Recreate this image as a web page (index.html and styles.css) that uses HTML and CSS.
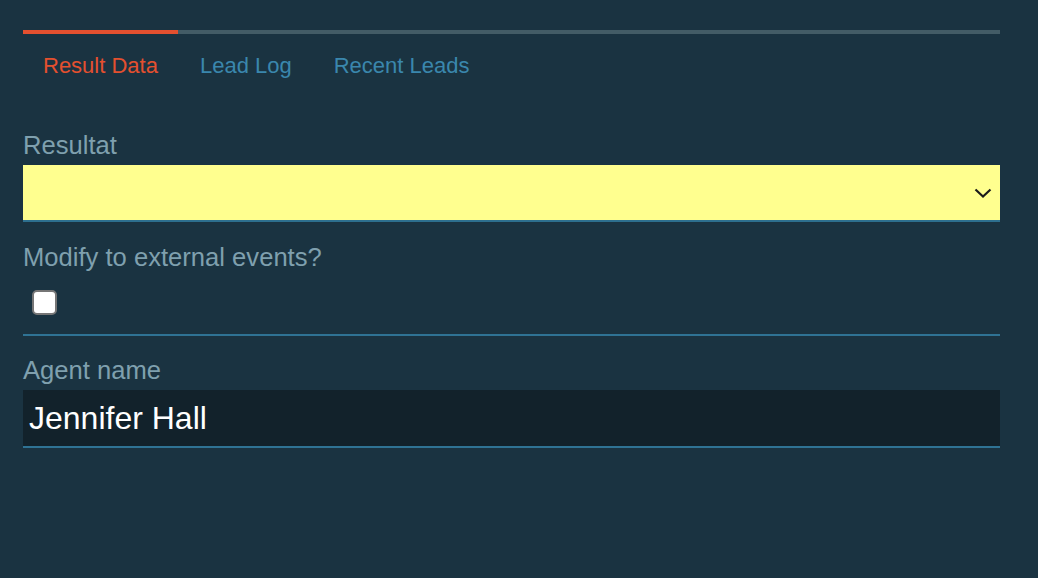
FILE: index.html
```html
<!DOCTYPE html>
<html lang="en">
<head>
<meta charset="utf-8">
<title>Result Data</title>
<link rel="stylesheet" href="styles.css">
</head>
<body>
<div class="panel">
  <nav class="tabs">
    <a class="tab active">Result Data</a>
    <a class="tab">Lead Log</a>
    <a class="tab">Recent Leads</a>
    <span class="tab-fill"></span>
  </nav>
  <form class="form">
    <div class="field">
      <label class="label">Resultat</label>
      <div class="select">
        <svg class="chevron" width="18" height="11" viewBox="0 0 18 11"><path d="M1.5 1.5 L9 8.5 L16.5 1.5" fill="none" stroke="#1b1b1b" stroke-width="2.2"/></svg>
      </div>
    </div>
    <div class="field field-check">
      <label class="label">Modify to external events?</label>
      <span class="checkbox"></span>
    </div>
    <div class="field field-agent">
      <label class="label">Agent name</label>
      <div class="input">Jennifer Hall</div>
    </div>
  </form>
</div>
</body>
</html>
```
FILE: styles.css
```css
html, body {
  margin: 0;
  padding: 0;
  background: #1a3341;
  font-family: "Liberation Sans", Arial, Helvetica, sans-serif;
}
.panel {
  width: 977px;
  padding: 30px 0 0 23px;
}
.tabs {
  display: flex;
}
.tab {
  border-top: 4px solid #435c66;
  padding: 19px 20px 19px 20px;
  font-size: 22px;
  line-height: 25px;
  color: #3a87ad;
  white-space: nowrap;
}
.tab.active {
  border-top-color: #e4502f;
  color: #e4502f;
}
.tab + .tab {
  padding-left: 22px;
  padding-right: 20px;
}
.tab-fill {
  flex: 1;
  border-top: 4px solid #435c66;
}
.form {
  margin-top: 34px;
  display: flex;
  flex-direction: column;
}
.label {
  display: block;
  font-size: 25.6px;
  line-height: 29px;
  color: #7fa0ae;
}
.select {
  margin-top: 5px;
  height: 55px;
  background: #ffff8f;
  border-bottom: 2px solid #2d6f8e;
  display: flex;
  align-items: center;
  justify-content: flex-end;
  padding-right: 8px;
}
.chevron {
  margin-top: 2px;
}
.field-check {
  margin-top: 21px;
  padding-bottom: 19px;
  border-bottom: 2px solid #2f7394;
}
.checkbox {
  display: block;
  margin: 18px 0 0 9px;
  width: 21px;
  height: 21px;
  background: #fff;
  border: 2px solid #767676;
  border-radius: 5px;
}
.field-agent {
  margin-top: 20px;
}
.input {
  margin-top: 5px;
  height: 56px;
  background: #12222b;
  border-bottom: 2px solid #2f7394;
  color: #fff;
  font-size: 32px;
  line-height: 56px;
  padding-left: 6px;
}
```
